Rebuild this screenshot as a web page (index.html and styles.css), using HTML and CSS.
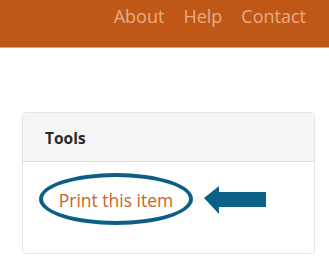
FILE: index.html
```html
<!DOCTYPE html>
<html>
<head>
<meta charset="utf-8">
<link rel="stylesheet" href="styles.css">
</head>
<body>
<header class="topbar">
  <nav class="nav">
    <a class="nav-link" href="#">About</a>
    <a class="nav-link" href="#">Help</a>
    <a class="nav-link" href="#">Contact</a>
  </nav>
</header>
<main class="main">
  <section class="card">
    <div class="card-header">Tools</div>
    <div class="card-body">
      <span class="highlight"><a class="print-link" href="#">Print this item</a></span>
      <svg class="arrow" width="63" height="29" viewBox="0 0 63 29">
        <polygon points="0,12 15,0 15,6 62,6 62,21 15,21 15,28" fill="#0b6088"/>
      </svg>
    </div>
  </section>
</main>
</body>
</html>
```
FILE: styles.css
```css
html, body {
  margin: 0;
  padding: 0;
  background: #fff;
  font-family: "Open Sans", "Noto Sans", sans-serif;
}
.topbar {
  height: 47px;
  background: #bf5817;
  border-bottom: 1px solid #e9a57a;
  display: flex;
  justify-content: flex-end;
}
.nav {
  display: flex;
  gap: 19px;
  padding: 1px 23px 0 0;
}
.nav-link {
  color: #eaaa86;
  text-decoration: none;
  font-size: 18px;
  line-height: 30px;
  letter-spacing: 0;
}
.main {
  padding: 64px 15px 0 22px;
}
.card {
  width: 291px;
  border: 1px solid #e6e6e6;
  border-radius: 4px;
  overflow: hidden;
}
.card-header {
  height: 49px;
  background: #f5f5f5;
  border-bottom: 1px solid #dedede;
  box-sizing: border-box;
  padding: 15px 0 0 22px;
  font-size: 15.5px;
  font-weight: 700;
  color: #2a2a2a;
  line-height: 20px;
}
.card-body {
  height: 91px;
  box-sizing: border-box;
  padding: 11px 0 0 16px;
  display: flex;
  align-items: flex-start;
}
.highlight {
  box-sizing: border-box;
  width: 154px;
  height: 52px;
  border: 4px solid #0e5d84;
  border-radius: 50%;
  display: flex;
  align-items: center;
  justify-content: center;
}
.print-link {
  color: #c5642b;
  text-decoration: none;
  font-size: 17.5px;
  letter-spacing: 0;
  margin-top: 1px;
}
.arrow {
  margin: 13px 0 0 11px;
}
```
